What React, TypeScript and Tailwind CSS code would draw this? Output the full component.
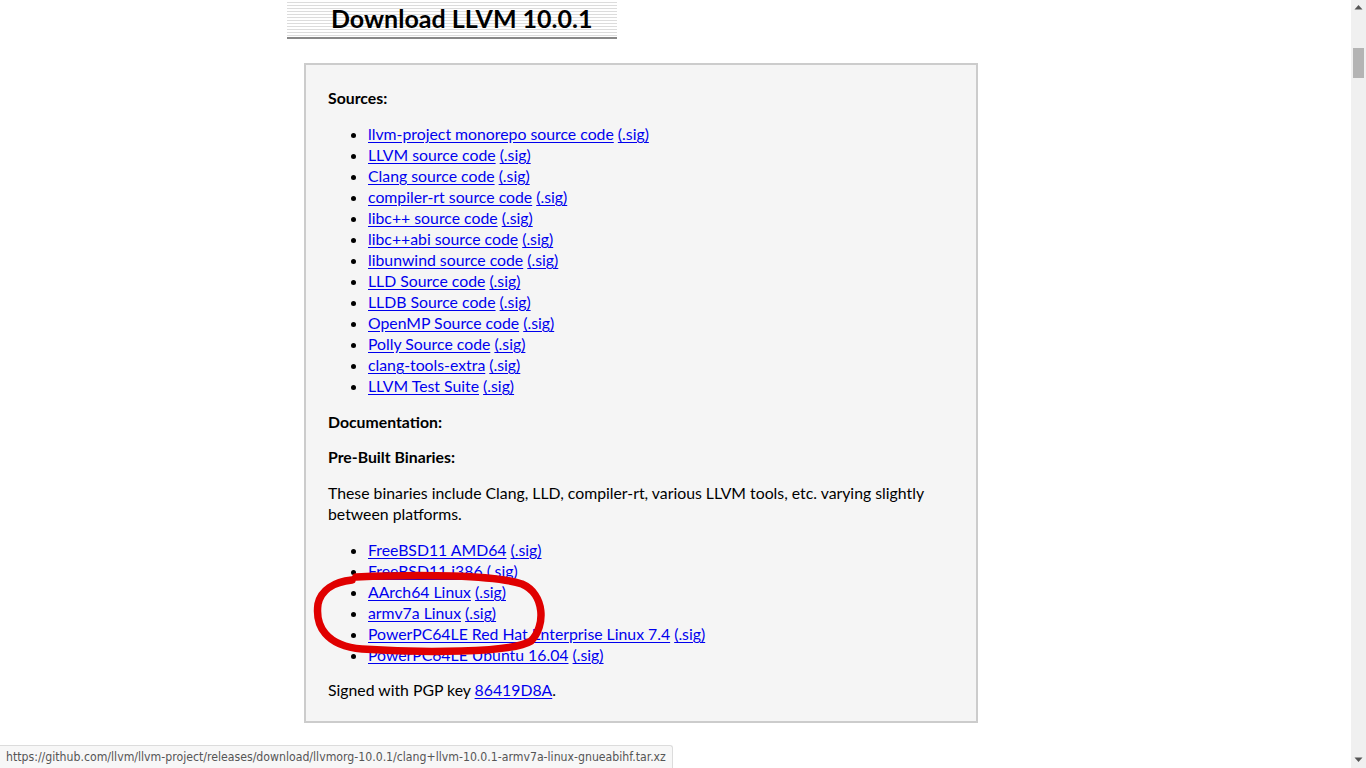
import React from 'react';

type Item = { label: string };

const sources: Item[] = [
  { label: 'llvm-project monorepo source code' },
  { label: 'LLVM source code' },
  { label: 'Clang source code' },
  { label: 'compiler-rt source code' },
  { label: 'libc++ source code' },
  { label: 'libc++abi source code' },
  { label: 'libunwind source code' },
  { label: 'LLD Source code' },
  { label: 'LLDB Source code' },
  { label: 'OpenMP Source code' },
  { label: 'Polly Source code' },
  { label: 'clang-tools-extra' },
  { label: 'LLVM Test Suite' },
];

const binaries: Item[] = [
  { label: 'FreeBSD11 AMD64' },
  { label: 'FreeBSD11 i386' },
  { label: 'AArch64 Linux' },
  { label: 'armv7a Linux' },
  { label: 'PowerPC64LE Red Hat Enterprise Linux 7.4' },
  { label: 'PowerPC64LE Ubuntu 16.04' },
];

const Link: React.FC<{ children: React.ReactNode }> = ({ children }) => (
  <a href="#" className="text-[#0000ee] underline underline-offset-2">
    {children}
  </a>
);

const DownloadList: React.FC<{ items: Item[] }> = ({ items }) => (
  <ul className="list-disc pl-[40px] mt-[15px] marker:text-black">
    {items.map((item) => (
      <li key={item.label}>
        <Link>{item.label}</Link> <Link>(.sig)</Link>
      </li>
    ))}
  </ul>
);

const App: React.FC = () => {
  return (
    <div className="flex h-screen overflow-hidden bg-white font-['Lato','Open_Sans',sans-serif] text-[15.8px] leading-[21px] text-black">
      {/* Page */}
      <div className="relative flex-1">
        <div className="pl-[287px] pt-[2px]">
          <div className="w-[330px] h-[37px] border-b-2 border-[#888] bg-[repeating-linear-gradient(to_bottom,#dcdcdc_0px,#dcdcdc_1px,#ffffff_1px,#ffffff_3px)] pl-[44px] font-bold text-[25px] leading-[33px]">
            Download LLVM 10.0.1
          </div>
        </div>

        <div className="ml-[304px] mt-[24px] w-[674px] border-2 border-[#cccccc] bg-[#f5f5f5] px-[22px] pt-[22px] pb-[21px]">
          <h3 className="font-bold">Sources:</h3>
          <DownloadList items={sources} />

          <h3 className="font-bold mt-[15px]">Documentation:</h3>
          <h3 className="font-bold mt-[14px]">Pre-Built Binaries:</h3>

          <p className="mt-[15px]">
            These binaries include Clang, LLD, compiler-rt, various LLVM tools, etc. varying slightly between platforms.
          </p>
          <DownloadList items={binaries} />

          <p className="mt-[14px]">
            Signed with PGP key <Link>86419D8A</Link>.
          </p>
        </div>

        {/* hand-drawn annotation */}
        <svg className="absolute left-0 top-0 pointer-events-none" width="1351" height="768">
          <path
            d="M356,577 C420,574 495,575 522,584 C545,594 546,626 531,641 C512,653 420,653 362,649 C326,646 315,626 318,604 C321,590 334,582 352,580"
            fill="none"
            stroke="#e00000"
            strokeWidth="7.5"
            strokeLinecap="round"
            strokeLinejoin="round"
          />
        </svg>

        {/* status bar */}
        <div className="absolute left-0 bottom-0 w-[673px] h-[23px] bg-[#f7f7f7] border-t border-r border-[#dcdcdc] rounded-tr-[3px] pl-[6px] font-['DejaVu_Sans_Condensed','DejaVu_Sans',sans-serif] [font-stretch:condensed] text-[12.2px] leading-[22px] text-[#555]">
          https://github.com/llvm/llvm-project/releases/download/llvmorg-10.0.1/clang+llvm-10.0.1-armv7a-linux-gnueabihf.tar.xz
        </div>
      </div>

      {/* scrollbar */}
      <div className="w-[15px] h-screen bg-[#f0f0f0] flex flex-col items-center">
        <svg width="15" height="15" viewBox="0 0 15 15">
          <path d="M3.5,9.5 L7.5,5 L11.5,9.5 Z" fill="#555" />
        </svg>
        <div className="mt-[33px] w-[11px] h-[30px] bg-[#b4b4b4]" />
        <div className="flex-1" />
        <svg width="15" height="15" viewBox="0 0 15 15" className="mb-[1px]">
          <path d="M3.5,5.5 L7.5,10 L11.5,5.5 Z" fill="#555" />
        </svg>
      </div>
    </div>
  );
};

export default App;
